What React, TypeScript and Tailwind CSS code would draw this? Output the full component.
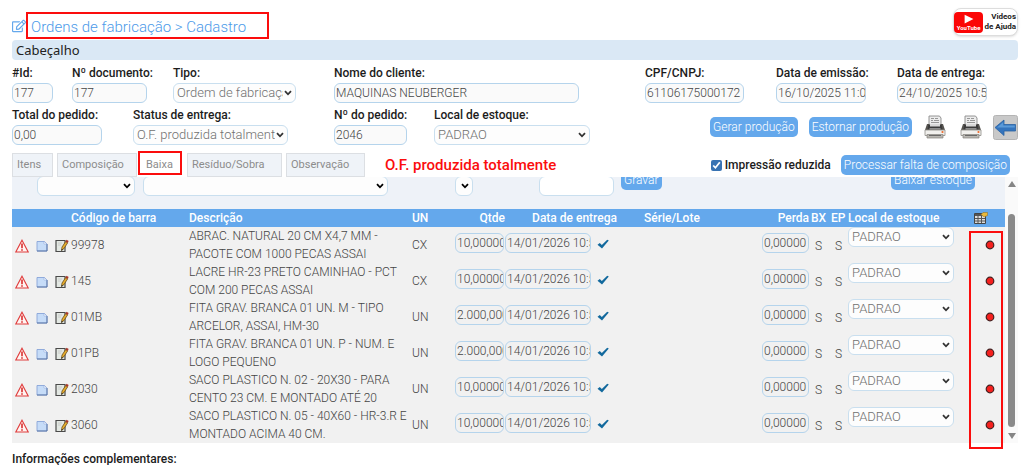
import React from "react";
import { FaRegEdit } from "react-icons/fa";

type Row = {
    code: string;
    description: [string, string];
    unit: string;
    quantity: string;
};

const rows: Row[] = [
    { code: "99978", description: ["ABRAC. NATURAL 20 CM X4,7 MM -", "PACOTE COM 1000 PECAS ASSAI"], unit: "CX", quantity: "10,000000" },
    { code: "145", description: ["LACRE HR-23 PRETO CAMINHAO - PCT", "COM 200 PECAS ASSAI"], unit: "CX", quantity: "10,000000" },
    { code: "01MB", description: ["FITA GRAV. BRANCA 01 UN. M - TIPO", "ARCELOR, ASSAI, HM-30"], unit: "UN", quantity: "2.000,000000" },
    { code: "01PB", description: ["FITA GRAV. BRANCA 01 UN. P - NUM. E", "LOGO PEQUENO"], unit: "UN", quantity: "2.000,000000" },
    { code: "2030", description: ["SACO PLASTICO N. 02 - 20X30 - PARA", "CENTO 23 CM. E MONTADO ATÉ 20"], unit: "UN", quantity: "10,000000" },
    { code: "3060", description: ["SACO PLASTICO N. 05 - 40X60 - HR-3.R E", "MONTADO ACIMA 40 CM."], unit: "UN", quantity: "10,000000" },
];

const inputStyle = "block h-5 rounded-md border border-[#b5d4ec] pl-px font-light text-[#444] outline-none";
const buttonStyle = "h-5 rounded-[5px] bg-[#64a8ec] px-[3px] leading-5 font-light text-white whitespace-nowrap";

const Field = ({ id, label, value, width }: { id: string; label: string; value: string; width: string }) => (
    <div>
        <label htmlFor={id} className="block h-5 leading-5 font-medium whitespace-nowrap">{label}</label>
        <input id={id} defaultValue={value} className={`${inputStyle} bg-[#fafafa] ${width}`} />
    </div>
);

const Select = ({ id, value, className, label, dark }: { id: string; value: string; className: string; label: string; dark?: boolean }) => (
    <div className={`relative ${className}`}>
        <select
            id={id}
            aria-label={label}
            className="block h-5 w-full appearance-none rounded-md border border-[#c9dfef] bg-[#fdfdfd] pr-3 pl-[3px] text-[13px] leading-[18px] font-light text-[#707070] outline-none"
        >
            <option>{value}</option>
        </select>
        <svg viewBox="0 0 8 6" className={`pointer-events-none absolute top-[7px] right-1 h-1.5 w-2 ${dark ? "text-black" : "text-[#333]"}`}>
            <path d="M1 1.2 4 4.3 7 1.2" fill="none" stroke="currentColor" strokeWidth="1.8" />
        </svg>
    </div>
);

const PrinterIcon = () => (
    <svg viewBox="0 0 22 24" className="h-6 w-[22px]">
        <path d="M5 10V1h10.500l1.500 2v7z" fill="#ececec" stroke="#8a8a8a" strokeWidth=".9" />
        <path d="M7 3.500h3M11 3.500h3M7 5.500h2M10 5.500h5M7 7.500h8" stroke="#8d8d8d" strokeWidth=".9" />
        <path d="M3 9h2v3h12V9h2l2 6H1z" fill="#55534f" />
        <path d="M4.500 9.500h13l1 5h-15z" fill="#3b3b3b" />
        <path d="M6 9h10v2.500H6z" fill="#d8d8d8" />
        <path d="M5.500 13h11v1.800h-11z" fill="#8d8d8d" />
        <path d="M1 15h20v5.500H1z" fill="#f1f0ed" stroke="#8f8d88" strokeWidth=".8" />
        <path d="M3 19.500h16V23H3z" fill="#b9b7b2" stroke="#85837d" strokeWidth=".7" />
        <path d="M5 20.500h12" stroke="#555" strokeWidth=".8" />
        <circle cx="18.500" cy="17" r="1.100" fill="#ee6a2c" />
    </svg>
);

const BackIcon = () => (
    <svg viewBox="0 0 25 25" className="size-[25px]">
        <rect x=".5" y=".5" width="24" height="24" rx="2" fill="#c9c9c9" stroke="#b4b4b4" />
        <path d="M2 12.500 11 5v4.500h11.500v6.500H11v4.500z" fill="#3474bd" stroke="#2a62a2" strokeWidth=".8" />
        <path d="M4 12.500 10.300 7v3.500h11.500v2z" fill="#5b9ad8" />
    </svg>
);

const WarningIcon = () => (
    <svg viewBox="0 0 14 14" className="size-3.5">
        <path d="M7 1.200 13.200 13H.8z" fill="#fff5f3" stroke="#e03c3c" strokeWidth="1.100" />
        <path d="M7 4.500v4.700M7 10.200v1.600" stroke="#d62020" strokeWidth="1.500" />
    </svg>
);

const PageIcon = () => (
    <svg viewBox="0 0 12 12" className="size-3">
        <path d="M1 1.500h7.500L11 4v7H1z" fill="#c6dcf8" stroke="#88a4d8" strokeWidth=".9" />
        <path d="M1 11h10V4" fill="none" stroke="#56709f" strokeWidth=".9" />
        <path d="M8 1.500V4h3z" fill="#fff" stroke="#88a4d8" strokeWidth=".5" />
    </svg>
);

const EditIcon = () => (
    <svg viewBox="0 0 14 14" className="size-3.5">
        <path d="M1 1.500h9v11H1z" fill="#e3e8e3" stroke="#4a4a4a" strokeWidth="1.200" />
        <path d="M3 4h4M3 6h3" stroke="#c4c4c4" strokeWidth=".8" />
        <path d="M6.500 11.500 7 8l3.700-5.500 2 1.300L9 9.500z" fill="#e5ac2d" stroke="#5a4016" strokeWidth=".7" />
        <path d="m10.500 2.600 1-1.900 2.200 1.400-1.200 1.800z" fill="#a8372a" />
        <path d="m6.400 11.800.3-1.900 1.300.8z" fill="#222" />
    </svg>
);

const CheckIcon = () => (
    <svg viewBox="0 0 12 10" className="h-2.5 w-3">
        <path d="M.5 5.800 2.800 4l2 1.900L10.200.8l1.600.8L5 9.600z" fill="#12699d" />
    </svg>
);

const GridIcon = () => (
    <svg viewBox="0 0 14 12" className="h-3 w-3.5">
        <path d="M.5 1.500h11v10H.5z" fill="#ddd" stroke="#444" />
        <path d="M1 2h10v2H1z" fill="#555" />
        <path d="M1 6.500h10M1 9h10M4 4v7M7.500 4v7" stroke="#555" strokeWidth="1" />
        <path d="M7 2.500 9 .5h4.500v3L10 5z" fill="#e9b83a" stroke="#8d6a1c" strokeWidth=".5" />
    </svg>
);

const DotIcon = () => (
    <svg viewBox="0 0 10 10" className="size-2.5">
        <circle cx="5" cy="5" r="3.800" fill="#f5201e" stroke="#432020" strokeWidth="1.200" />
    </svg>
);

const Tab = ({ name, width, active }: { name: string; width: string; active?: boolean }) => (
    <button
        className={`relative h-6 border pl-1 text-left text-[11px] font-normal text-[#8c8c8c] ${width} ${active ? "border-transparent bg-white" : "border-[#dcdfe3] bg-[#eff3f8]"}`}
    >
        {name}
        {active && <span className="absolute -top-[3px] -left-1 h-6 w-11 border-2 border-[#fb0d0d]" />}
    </button>
);

const App = () => {
    return (
        <main className="bg-white pt-2 pr-1.5 pl-3 font-[Roboto,sans-serif] text-[12px] text-[#1c1c1c]">
            {/* Title */}
            <header className="flex h-8 items-start justify-between">
                <div className="flex items-center pt-1">
                    <FaRegEdit className="size-3.5 text-[#64a8ec]" />
                    <h1 className="h-[27px] w-[243px] border-2 border-[#fb0d0d] pl-[3px] text-[15px] leading-[26px] font-light whitespace-nowrap text-[#4c9ae9]">
                        Ordens de fabricação &gt; Cadastro
                    </h1>
                </div>
                <a href="#ajuda" className="flex h-7 w-[65px] items-center rounded-lg border border-[#ddd] bg-white pr-px shadow-sm">
                    <span className="flex h-[21px] w-[29px] shrink-0 flex-col items-center rounded bg-[#fb0606] pt-0.5">
                        <svg viewBox="0 0 8 8" className="size-2.5"><path d="M.5.500 7.500 4 .5 7.500z" fill="#fff" /></svg>
                        <span className="text-[6px] leading-[8px] font-bold text-white">YouTube</span>
                    </span>
                    <span className="flex-1 text-right text-[8px] leading-[10px] font-bold whitespace-nowrap text-[#222]">
                        Videos<br />de Ajuda
                    </span>
                </a>
            </header>

            <h2 className="h-5 rounded bg-[#dae8f5] pl-1 font-['Noto_Sans',sans-serif] text-[13px] leading-5 text-[#222]">Cabeçalho</h2>

            {/* Header fields */}
            <section className="grid grid-cols-[60px_101px_161px_1fr_131px_121px_121px] pt-[3px]">
                <Field id="id" label="#Id:" value="177" width="w-[41px]" />
                <Field id="documento" label="Nº documento:" value="177" width="w-[75px]" />
                <div>
                    <label htmlFor="tipo" className="block h-5 leading-5 font-medium">Tipo:</label>
                    <Select id="tipo" label="Tipo" value="Ordem de fabricação" className="w-[123px]" />
                </div>
                <Field id="cliente" label="Nome do cliente:" value="MAQUINAS NEUBERGER" width="w-[245px]" />
                <Field id="cnpj" label="CPF/CNPJ:" value="61106175000172" width="w-[99px]" />
                <Field id="emissao" label="Data de emissão:" value="16/10/2025 11:07:00" width="w-[90px]" />
                <Field id="entrega" label="Data de entrega:" value="24/10/2025 10:52:00" width="w-[90px]" />
            </section>
            <section className="grid grid-cols-[121px_201px_100px_1fr_auto] pt-0.5">
                <Field id="total" label="Total do pedido:" value="0,00" width="w-[90px]" />
                <div>
                    <label htmlFor="status" className="block h-5 leading-5 font-medium">Status de entrega:</label>
                    <Select id="status" label="Status de entrega" value="O.F. produzida totalmente" className="w-[155px]" />
                </div>
                <Field id="pedido" label="Nº do pedido:" value="2046" width="w-[73px]" />
                <div>
                    <label htmlFor="local" className="block h-5 leading-5 font-medium">Local de estoque:</label>
                    <Select id="local" label="Local de estoque" value="PADRAO" className="w-[156px]" />
                </div>
                <div className="flex items-center pt-1">
                    <button className={buttonStyle}>Gerar produção</button>
                    <button className={`ml-[11px] ${buttonStyle}`}>Estornar produção</button>
                    <button aria-label="Imprimir" className="ml-3"><PrinterIcon /></button>
                    <button aria-label="Imprimir etiqueta" className="ml-3.5"><PrinterIcon /></button>
                    <button aria-label="Voltar" className="ml-[11px]"><BackIcon /></button>
                </div>
            </section>

            {/* Tabs */}
            <div className="flex items-center pt-2">
                <nav className="flex gap-1">
                    <Tab name="Itens" width="w-[41px]" />
                    <Tab name="Composição" width="w-[80px]" />
                    <Tab name="Baixa" width="w-[42px]" active />
                    <Tab name="Resíduo/Sobra" width="w-[95px]" />
                    <Tab name="Observação" width="w-[79px]" />
                </nav>
                <strong className="ml-5 text-[15px] leading-5 font-medium whitespace-nowrap text-[#fb0d0d]">O.F. produzida totalmente</strong>
                <div className="ml-auto flex items-center pr-2">
                    <input id="reduzida" type="checkbox" defaultChecked className="size-[11px] accent-[#3873b3]" />
                    <label htmlFor="reduzida" className="mr-2.5 ml-[3px] font-medium whitespace-nowrap">Impressão reduzida</label>
                    <button className={buttonStyle}>Processar falta de composição</button>
                </div>
            </div>

            <div className="flex">
                <section className="relative min-w-0 flex-1 bg-[#eef2f8]">
                    {/* Entry line, scrolled partly out of view */}
                    <div className="flex h-8 items-start overflow-hidden pl-[25px]">
                        <Select id="novo-codigo" label="Código de barra" value="" dark className="-mt-px w-[98px]" />
                        <Select id="novo-descricao" label="Descrição" value="" dark className="-mt-px ml-2 w-[245px]" />
                        <Select id="novo-un" label="UN" value="" dark className="-mt-px ml-[67px] w-[18px]" />
                        <input aria-label="Quantidade" className="-mt-px ml-[66px] h-5 w-[75px] rounded-md border border-[#c9dfef] bg-white" />
                        <button className={`-mt-[7px] ml-[7px] ${buttonStyle}`}>Gravar</button>
                        <button className={`-mt-[7px] mr-[30px] ml-auto ${buttonStyle}`}>Baixar estoque</button>
                    </div>
                    <table className="w-full table-fixed border-collapse bg-[#f1f1f1] text-[#444]">
                        <colgroup>
                            <col className="w-[59px]" />
                            <col className="w-[118px]" />
                            <col className="w-[223px]" />
                            <col className="w-[43px]" />
                            <col className="w-[50px]" />
                            <col className="w-[139px]" />
                            <col />
                            <col className="w-[49px]" />
                            <col className="w-5" />
                            <col className="w-[17px]" />
                            <col className="w-[108px]" />
                            <col className="w-[49px]" />
                        </colgroup>
                        <thead className="bg-[#64a8ec] text-left text-white">
                            <tr className="h-[18px] leading-[18px] whitespace-nowrap *:p-0 *:font-medium">
                                <th />
                                <th>Código de barra</th>
                                <th>Descrição</th>
                                <th>UN</th>
                                <th className="text-right">Qtde</th>
                                <th className="text-center">Data de entrega</th>
                                <th>Série/Lote</th>
                                <th><span className="flex justify-end pr-0.5">Perda</span></th>
                                <th>BX</th>
                                <th>EP</th>
                                <th>Local de estoque</th>
                                <th><span className="flex justify-center"><GridIcon /></span></th>
                            </tr>
                        </thead>
                        <tbody className="font-light">
                            {rows.map((row) => (
                                <tr key={row.code} className="h-9 *:p-0">
                                    <td>
                                        <div className="flex items-center gap-[7px] pt-0.5 pl-[3px]">
                                            <WarningIcon />
                                            <PageIcon />
                                            <EditIcon />
                                        </div>
                                    </td>
                                    <td>{row.code}</td>
                                    <td className="leading-[18px] whitespace-nowrap">
                                        {row.description[0]}<br />{row.description[1]}
                                    </td>
                                    <td>{row.unit}</td>
                                    <td>
                                        <div className="pb-1">
                                            <input aria-label="Qtde" defaultValue={row.quantity} className={`${inputStyle} w-[49px] bg-transparent`} />
                                        </div>
                                    </td>
                                    <td>
                                        <div className="flex items-end gap-1.5 pb-1">
                                            <input aria-label="Data de entrega" defaultValue="14/01/2026 10:52:00" className={`${inputStyle} w-[86px] bg-transparent`} />
                                            <span className="pb-1"><CheckIcon /></span>
                                        </div>
                                    </td>
                                    <td />
                                    <td>
                                        <div className="pb-1">
                                            <input aria-label="Perda" defaultValue="0,00000" className={`${inputStyle} w-[47px] bg-transparent`} />
                                        </div>
                                    </td>
                                    <td><span className="block pt-0.5 pl-1">S</span></td>
                                    <td><span className="block pt-0.5 pl-1">S</span></td>
                                    <td className="align-top">
                                        <Select id={`local-${row.code}`} label="Local de estoque" value="PADRAO" className="w-[106px]" />
                                    </td>
                                    <td><span className="flex justify-center pl-[18px]"><DotIcon /></span></td>
                                </tr>
                            ))}
                        </tbody>
                    </table>
                    <div className="pointer-events-none absolute top-[54px] right-0.5 -bottom-1.5 w-[34px] border-2 border-[#fb0d0d]" />
                </section>

                {/* Scrollbar */}
                <div className="flex w-[13px] flex-col items-center bg-[#fafafa] py-1">
                    <svg viewBox="0 0 8 6" className="h-1.5 w-2"><path d="M4 0 8 6H0z" fill="#858585" /></svg>
                    <div className="mt-[27px] mb-1.5 w-[7px] flex-1 rounded-full bg-[#8a8a8a]" />
                    <svg viewBox="0 0 8 6" className="h-1.5 w-2"><path d="M0 0h8L4 6z" fill="#858585" /></svg>
                </div>
            </div>

            <p className="pt-2 leading-4 font-medium">Informações complementares:</p>
        </main>
    );
};

export default App;
